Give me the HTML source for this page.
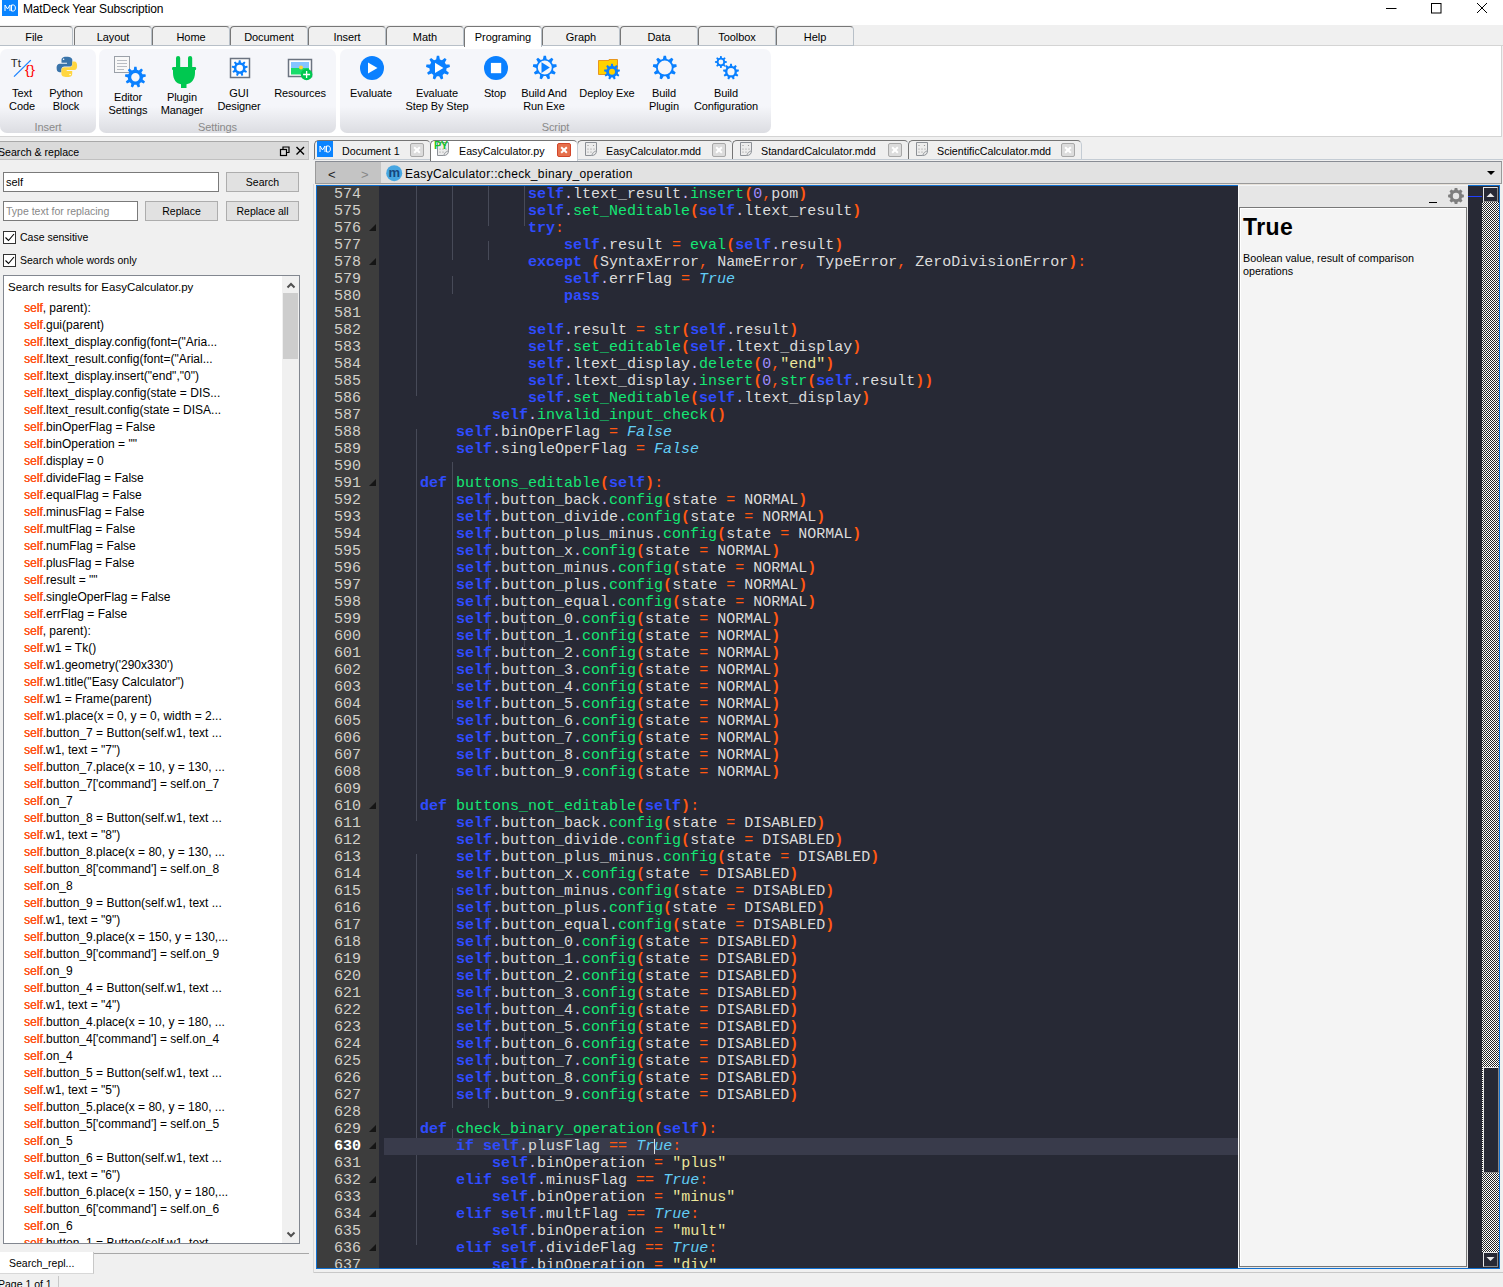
<!DOCTYPE html>
<html><head><meta charset="utf-8">
<style>
*{margin:0;padding:0;box-sizing:border-box}
html,body{width:1503px;height:1287px;overflow:hidden;background:#f0f0f0;font-family:"Liberation Sans",sans-serif;font-size:12px;color:#000}
.a{position:absolute}
/* title */
#title{left:0;top:0;width:1503px;height:25px;background:#fff}
#mdico{left:2px;top:0;width:16px;height:16px;background:#0a84ff}
#ttext{left:23px;top:1px;font-size:12px;line-height:16px;letter-spacing:-0.15px}
/* menu tabs */
#menubar{left:0;top:25px;width:1503px;height:20px;background:#f0f0f0}
.mt{top:26px;height:20px;width:78px;border:1px solid #777;border-right-color:#b8c0c8;border-bottom:none;border-radius:4px 4px 0 0;background:#f0f0f0;text-align:center;line-height:20px;font-size:11px;letter-spacing:-0.05px}
.mt.act{background:#fff;height:21px;z-index:2}
#menuline{left:0;top:45px;width:854px;height:1px;background:#b8c0c8;z-index:1}
#menuline2{left:854px;top:45px;width:649px;height:1px;background:#d4d4d4;z-index:1}
/* ribbon */
#ribbon{left:0;top:46px;width:1502px;height:91px;background:#fff;border-right:1px solid #d4d4d4;border-bottom:1px solid #d4d4d4}
.grp{top:49px;height:84px;border-radius:7px;background:linear-gradient(#f5f6fa 0%,#f5f6fa 68%,#dcdde2 100%)}
.glab{color:#8a8a8a;font-size:11px;letter-spacing:-0.1px;text-align:center;top:120px;line-height:14px}
.bt{text-align:center;font-size:11px;line-height:13px;color:#000;white-space:nowrap;letter-spacing:-0.1px}
/* dock */
#dockhead{left:0;top:141px;width:309px;height:19px;background:#dadada;border-top:1px solid #a8a8a8;border-bottom:1px solid #c0c0c0;border-right:1px solid #c4c4c4}
#docktitle{left:-2px;top:145px;font-size:10.6px;line-height:15px;letter-spacing:0px}
/* doc tabs */
.dt{top:140px;height:19px;border:1px solid #747474;border-right-color:#c4ccd4;border-bottom:none;border-radius:5px 5px 0 0;background:#efefef;font-size:10.7px;line-height:20px;white-space:nowrap}
.dt.act{background:#fff;height:21px;z-index:3}
.cx{position:absolute;top:2px;width:14px;height:14px;border:1px solid #a8a8a8;background:#dcdcdc;border-radius:2px}
.cx:before,.cx:after{content:"";position:absolute;left:2px;top:5px;width:8px;height:2px;background:#fff;transform:rotate(45deg)}
.cx:after{transform:rotate(-45deg)}
.cx.red{background:#e6704c;border-color:#d2462a}
.dice{position:absolute;top:1px;width:16px;height:16px;border:1px solid #c8c8c8;background:#f6f6f6;border-radius:3px;transform:skewY(-8deg)}
/* editor header */
#edhead{left:315px;top:161px;width:1187px;height:23px;background:#e2e2e2;border:1px solid #9a9a9a;border-top-color:#888c94}
#navbox{left:316px;top:162px;width:65px;height:21px;background:#c4c4c4}
/* code */
#codebox{left:316px;top:185px;width:1184px;height:1084px;background:#272935;border:1px solid #1070d0;overflow:hidden}
#gutter{left:0;top:0;width:62px;height:1085px;background:#3d3d3d}
.ln{position:absolute;left:0;width:44px;text-align:right;font-family:"Liberation Mono",monospace;font-size:15px;line-height:17px;color:#d2d0ca}
.ln.cur{color:#fff;font-weight:bold}
.fold{position:absolute;left:52px;width:0;height:0;border-left:7px solid transparent;border-bottom:7px solid #151515}
#code{left:0;top:0;width:1200px;height:1085px}
.cl{position:absolute;left:67px;white-space:pre;font-family:"Liberation Mono",monospace;font-size:15px;line-height:17px;color:#dcdcdc;height:17px;width:855px}
.cl b,.cl i{font-style:normal;font-weight:normal}
.cl .kw{color:#2f4cff;font-weight:bold}
.cl .pa{color:#ff5812;font-weight:bold}
.cl .op{color:#ff5812}
.cl .fn{color:#14e674}
.cl .dt2{color:#cdbaf2}
.cl .nu{color:#a08cff}
.cl .st{color:#ece69a}
.cl .cn{color:#62cef6;font-style:italic}
.cl.cur{background:#393b4b}
.gd{position:absolute;width:1px;background:#474a58}
/* calltip */
#ctip{left:1238px;top:185px;width:230px;height:1083px;background:#e6e6e6;border-left:1px solid #fafafa;border-top:1px solid #f2f4f6}
#ctbox{left:1239px;top:207px;width:228px;height:1060px;background:#f4f4f4;border:1px solid #787878;box-shadow:inset 1px 1px 0 #fff}
#sbar{left:1482px;top:202px;width:17px;height:1050px;background-image:conic-gradient(#fff 25%,#262626 0 50%,#fff 0 75%,#262626 0);background-size:2px 2px}
.sbtn{position:absolute;left:1483px;width:15px;height:15px;background:#272935;border:1px solid #e8e8e8;border-right-color:#888;border-bottom-color:#888}
/* search panel */
.inp{background:#fff;border:1px solid #7a7a7a;white-space:nowrap;overflow:hidden}
.pbtn{background:#e1e1e1;border:1px solid #adadad;text-align:center;line-height:18px;font-size:10.5px}
.cb{width:13px;height:13px;border:1px solid #333;background:#fff}
#reslist{left:3px;top:275px;width:297px;height:969px;background:#fff;border:1px solid #828790;overflow:hidden}
.rr{position:absolute;left:20px;white-space:pre;font-size:12px;line-height:17px;height:17px}
.sf{color:#ff4e10;text-shadow:0.3px 0 0 #ff4e10}
</style></head><body>
<div id="title" class="a"></div>
<div id="mdico" class="a"><svg width="16" height="16"><path d="M3,11 V5 L5.5,9 L8,5 V11 M9.5,5 H11.5 C14,5 14,11 11.5,11 H9.5 Z" stroke="#fff" stroke-width="1" fill="none"/></svg></div>
<div id="ttext" class="a">MatDeck Year Subscription</div>
<svg class="a" style="left:1380px;top:0" width="123" height="20"><path d="M6,8.5 H16.5" stroke="#000" stroke-width="1"/><rect x="51.5" y="3.5" width="9.5" height="9.5" fill="none" stroke="#000" stroke-width="1"/><path d="M97,3 L107,13 M107,3 L97,13" stroke="#000" stroke-width="1"/></svg>

<div id="menubar" class="a"></div>
<div class="a mt" style="left:-5px">File</div>
<div class="a mt" style="left:74px">Layout</div>
<div class="a mt" style="left:152px">Home</div>
<div class="a mt" style="left:230px">Document</div>
<div class="a mt" style="left:308px">Insert</div>
<div class="a mt" style="left:386px">Math</div>
<div class="a mt act" style="left:464px">Programing</div>
<div class="a mt" style="left:542px">Graph</div>
<div class="a mt" style="left:620px">Data</div>
<div class="a mt" style="left:698px">Toolbox</div>
<div class="a mt" style="left:776px">Help</div>
<div id="menuline" class="a"></div><div id="menuline2" class="a"></div>

<div id="ribbon" class="a"></div>
<div class="a grp" style="left:0;width:96px"></div>
<div class="a grp" style="left:99px;width:237px"></div>
<div class="a grp" style="left:340px;width:431px"></div>
<div class="a glab" style="left:0;width:96px">Insert</div>
<div class="a glab" style="left:99px;width:237px">Settings</div>
<div class="a glab" style="left:340px;width:431px">Script</div>
<svg class="a" style="left:0;top:0" width="800" height="140" viewBox="0 0 800 140">
<text x="10.8" y="67" font-family="Liberation Sans" font-size="11.5" fill="#2a2a2a">Tt</text>
<line x1="14" y1="76.6" x2="30.8" y2="60.1" stroke="#1a82ff" stroke-width="1.3"/>
<text x="25" y="74.2" font-family="Liberation Sans" font-size="12" fill="#ff0000" textLength="10" lengthAdjust="spacingAndGlyphs">{}</text>
<path d="M66.5,56.7 C62,56.7 61.5,58.6 61.5,60.3 V62.8 H67 V63.7 H59.5 C57.2,63.7 56.6,66 56.6,67.8 C56.6,70.4 57.3,72.2 59.5,72.2 H61.4 V69.6 C61.4,67.9 62.8,66.6 64.5,66.6 H69.5 C71.2,66.6 72.3,65.4 72.3,63.7 V60 C72.3,58 70.6,56.7 66.5,56.7Z" fill="#3a74aa"/>
<path d="M67.2,77.1 C71.7,77.1 72.2,75.2 72.2,73.5 V71 H66.7 V70.1 H74.2 C76.5,70.1 77.1,67.8 77.1,66 C77.1,63.4 76.4,61.6 74.2,61.6 H72.3 V64.2 C72.3,65.9 70.9,67.2 69.2,67.2 H64.2 C62.5,67.2 61.4,68.4 61.4,70.1 V73.8 C61.4,75.8 63.1,77.1 67.2,77.1Z" fill="#ffd640"/>
<circle cx="63.6" cy="59.3" r="0.8" fill="#fff"/><circle cx="70.1" cy="74.5" r="0.8" fill="#fff"/>
<rect x="114.5" y="56.5" width="15" height="16" fill="#f8f8f8" stroke="#9aa0a8"/>
<path d="M117,60.5h10M117,63.5h10M117,66.5h10M117,69.5h7" stroke="#b8bcc2" stroke-width="1"/>
<path fill-rule="evenodd" d="M133.82,69.77 L134.23,66.77 L136.57,66.77 L136.98,69.77 L138.97,70.49 L141.21,68.45 L143.00,69.96 L141.39,72.52 L142.45,74.35 L145.47,74.24 L145.88,76.54 L143.00,77.47 L142.63,79.55 L145.02,81.40 L143.85,83.43 L141.05,82.29 L139.43,83.65 L140.07,86.60 L137.87,87.41 L136.46,84.73 L134.34,84.73 L132.93,87.41 L130.73,86.60 L131.37,83.65 L129.75,82.29 L126.95,83.43 L125.78,81.40 L128.17,79.55 L127.80,77.47 L124.92,76.54 L125.33,74.24 L128.35,74.35 L129.41,72.52 L127.80,69.96 L129.59,68.45 L131.83,70.49Z M139.60,77.20 A4.2,4.2 0 1 0 131.20,77.20 A4.2,4.2 0 1 0 139.60,77.20Z" fill="#0a80ff"/>
<path d="M178.1,58 v10 M190.1,58 v10" stroke="#00c850" stroke-width="4.2" stroke-linecap="round"/>
<path d="M173,67 H195.2 Q196.2,67 196.2,68.5 Q196.2,70 195,70.3 V73 C195,79.5 191,83.8 186.5,84.2 V88 H181 V84.2 C176.5,83.8 173,79.5 173,73 V70.3 Q172,70 172,68.5 Q172,67 173,67Z" fill="#00c850"/>
<rect x="230.5" y="58.5" width="19" height="19" fill="#fdfdfd" stroke="#6b7380" stroke-width="1.5"/>
<path fill-rule="evenodd" d="M238.49,62.43 L238.81,60.15 L240.59,60.15 L240.91,62.43 L242.42,62.98 L244.13,61.44 L245.49,62.58 L244.27,64.53 L245.08,65.93 L247.37,65.84 L247.68,67.60 L245.50,68.30 L245.22,69.89 L247.03,71.30 L246.14,72.85 L244.01,71.98 L242.77,73.02 L243.26,75.27 L241.58,75.88 L240.51,73.84 L238.89,73.84 L237.82,75.88 L236.14,75.27 L236.63,73.02 L235.39,71.98 L233.26,72.85 L232.37,71.30 L234.18,69.89 L233.90,68.30 L231.72,67.60 L232.03,65.84 L234.32,65.93 L235.13,64.53 L233.91,62.58 L235.27,61.44 L236.98,62.98Z M243.00,68.10 A3.3,3.3 0 1 0 236.40,68.10 A3.3,3.3 0 1 0 243.00,68.10Z" fill="#0a80ff"/>
<rect x="288.5" y="59.5" width="23" height="17" fill="#fff" stroke="#6b7380" stroke-width="1.5"/>
<rect x="291" y="62" width="18" height="7" fill="#84c4ff"/>
<rect x="291" y="68" width="18" height="6.5" fill="#18dc6a"/>
<circle cx="301" cy="67.6" r="2" fill="#ffd43a"/>
<circle cx="306.6" cy="74.5" r="5.8" fill="#00c850"/>
<path d="M306.6,71v7M303.1,74.5h7" stroke="#fff" stroke-width="1.3"/>
<circle cx="372" cy="68" r="12" fill="#0a80ff"/>
<path d="M368,62.5 L377.5,68 L368,73.5Z" fill="#fff"/>
<path d="M436.15,59.40 L436.83,55.86 L439.17,55.86 L439.85,59.40 L441.98,60.18 L444.78,57.90 L446.57,59.40 L444.81,62.55 L445.95,64.52 L449.56,64.57 L449.96,66.88 L446.59,68.16 L446.20,70.40 L448.93,72.76 L447.76,74.79 L444.35,73.60 L442.61,75.06 L443.19,78.62 L440.98,79.42 L439.14,76.32 L436.86,76.32 L435.02,79.42 L432.81,78.62 L433.39,75.06 L431.65,73.60 L428.24,74.79 L427.07,72.76 L429.80,70.40 L429.41,68.16 L426.04,66.88 L426.44,64.57 L430.05,64.52 L431.19,62.55 L429.43,59.40 L431.22,57.90 L434.02,60.18Z" fill="#0a80ff"/>
<path d="M435,62.8 L443.4,68 L435,73.1Z" fill="#fff"/>
<circle cx="496" cy="68" r="12" fill="#0a80ff"/>
<rect x="490.9" y="62.9" width="10.3" height="10.3" fill="#fff"/>
<path fill-rule="evenodd" d="M542.95,59.20 L543.63,55.66 L545.97,55.66 L546.65,59.20 L548.78,59.98 L551.58,57.70 L553.37,59.20 L551.61,62.35 L552.75,64.32 L556.36,64.37 L556.76,66.68 L553.39,67.96 L553.00,70.20 L555.73,72.56 L554.56,74.59 L551.15,73.40 L549.41,74.86 L549.99,78.42 L547.78,79.22 L545.94,76.12 L543.66,76.12 L541.82,79.22 L539.61,78.42 L540.19,74.86 L538.45,73.40 L535.04,74.59 L533.87,72.56 L536.60,70.20 L536.21,67.96 L532.84,66.68 L533.24,64.37 L536.85,64.32 L537.99,62.35 L536.23,59.20 L538.02,57.70 L540.82,59.98Z M551.80,67.60 A7,7 0 1 0 537.80,67.60 A7,7 0 1 0 551.80,67.60Z" fill="#0a80ff"/>
<path d="M541.5,62.3 L549.8,67.6 L541.5,72.9Z" fill="#0a80ff"/>
<path d="M598.5,74.5 V60.5 H609 V59.5 H617.5 V74.5Z" fill="#ffd200" stroke="#e8961e" stroke-width="1"/>
<path d="M610.79,66.03 L611.11,63.75 L612.89,63.75 L613.21,66.03 L614.72,66.58 L616.43,65.04 L617.79,66.18 L616.57,68.13 L617.38,69.53 L619.67,69.44 L619.98,71.20 L617.80,71.90 L617.52,73.49 L619.33,74.90 L618.44,76.45 L616.31,75.58 L615.07,76.62 L615.56,78.87 L613.88,79.48 L612.81,77.44 L611.19,77.44 L610.12,79.48 L608.44,78.87 L608.93,76.62 L607.69,75.58 L605.56,76.45 L604.67,74.90 L606.48,73.49 L606.20,71.90 L604.02,71.20 L604.33,69.44 L606.62,69.53 L607.43,68.13 L606.21,66.18 L607.57,65.04 L609.28,66.58Z" fill="#0a80ff"/>
<circle cx="612" cy="71.7" r="3" fill="#ffd200"/>
<path fill-rule="evenodd" d="M662.91,59.01 L663.63,55.66 L665.97,55.66 L666.69,59.01 L668.88,59.80 L671.58,57.70 L673.37,59.20 L671.77,62.23 L672.94,64.25 L676.36,64.37 L676.76,66.68 L673.59,67.97 L673.19,70.26 L675.73,72.56 L674.56,74.59 L671.30,73.53 L669.52,75.03 L669.99,78.42 L667.78,79.22 L665.96,76.32 L663.64,76.32 L661.82,79.22 L659.61,78.42 L660.08,75.03 L658.30,73.53 L655.04,74.59 L653.87,72.56 L656.41,70.26 L656.01,67.97 L652.84,66.68 L653.24,64.37 L656.66,64.25 L657.83,62.23 L656.23,59.20 L658.02,57.70 L660.72,59.80Z M671.80,67.60 A7,7 0 1 0 657.80,67.60 A7,7 0 1 0 671.80,67.60Z" fill="#0a80ff"/>
<path fill-rule="evenodd" d="M719.90,57.82 L720.15,56.05 L721.65,56.05 L721.90,57.82 L723.15,58.33 L724.58,57.26 L725.64,58.32 L724.57,59.75 L725.08,61.00 L726.85,61.25 L726.85,62.75 L725.08,63.00 L724.57,64.25 L725.64,65.68 L724.58,66.74 L723.15,65.67 L721.90,66.18 L721.65,67.95 L720.15,67.95 L719.90,66.18 L718.65,65.67 L717.22,66.74 L716.16,65.68 L717.23,64.25 L716.72,63.00 L714.95,62.75 L714.95,61.25 L716.72,61.00 L717.23,59.75 L716.16,58.32 L717.22,57.26 L718.65,58.33Z M723.30,62.00 A2.4,2.4 0 1 0 718.50,62.00 A2.4,2.4 0 1 0 723.30,62.00Z" fill="#0a80ff"/>
<path fill-rule="evenodd" d="M729.77,65.93 L730.11,63.75 L731.89,63.75 L732.23,65.93 L733.77,66.49 L735.43,65.04 L736.79,66.18 L735.65,68.07 L736.47,69.49 L738.67,69.44 L738.98,71.20 L736.90,71.91 L736.61,73.52 L738.33,74.90 L737.44,76.45 L735.38,75.65 L734.13,76.70 L734.56,78.87 L732.88,79.48 L731.82,77.54 L730.18,77.54 L729.12,79.48 L727.44,78.87 L727.87,76.70 L726.62,75.65 L724.56,76.45 L723.67,74.90 L725.39,73.52 L725.10,71.91 L723.02,71.20 L723.33,69.44 L725.53,69.49 L726.35,68.07 L725.21,66.18 L726.57,65.04 L728.23,66.49Z M734.60,71.70 A3.6,3.6 0 1 0 727.40,71.70 A3.6,3.6 0 1 0 734.60,71.70Z" fill="#0a80ff"/>
</svg>
<div class="a bt" style="left:-28px;width:100px;top:87px">Text<br>Code</div>
<div class="a bt" style="left:16px;width:100px;top:87px">Python<br>Block</div>
<div class="a bt" style="left:78px;width:100px;top:91px">Editor<br>Settings</div>
<div class="a bt" style="left:132px;width:100px;top:91px">Plugin<br>Manager</div>
<div class="a bt" style="left:189px;width:100px;top:87px">GUI<br>Designer</div>
<div class="a bt" style="left:250px;width:100px;top:87px">Resources</div>
<div class="a bt" style="left:321px;width:100px;top:87px">Evaluate</div>
<div class="a bt" style="left:387px;width:100px;top:87px">Evaluate<br>Step By Step</div>
<div class="a bt" style="left:445px;width:100px;top:87px">Stop</div>
<div class="a bt" style="left:494px;width:100px;top:87px">Build And<br>Run Exe</div>
<div class="a bt" style="left:557px;width:100px;top:87px">Deploy Exe</div>
<div class="a bt" style="left:614px;width:100px;top:87px">Build<br>Plugin</div>
<div class="a bt" style="left:676px;width:100px;top:87px">Build<br>Configuration</div>


<div id="dockhead" class="a"></div>
<div id="docktitle" class="a">Search &amp; replace</div>
<svg class="a" style="left:278px;top:144px" width="30" height="14"><rect x="2.5" y="5.5" width="6" height="6" fill="none" stroke="#000" stroke-width="1.2"/><path d="M5,5.5 V3 H11 V8.5 H8.5" fill="none" stroke="#000" stroke-width="1.2"/><path d="M18.5,3 L26,10.5 M26,3 L18.5,10.5" stroke="#000" stroke-width="1.4"/></svg>
<div class="a inp" style="left:3px;top:172px;width:216px;height:20px;padding-left:2px;line-height:19px;font-size:11px">self</div>
<div class="a pbtn" style="left:226px;top:172px;width:73px;height:20px">Search</div>
<div class="a inp" style="left:3px;top:201px;width:135px;height:20px;padding-left:2px;line-height:19px;color:#888;font-size:10.5px">Type text for replacing</div>
<div class="a pbtn" style="left:145px;top:201px;width:73px;height:20px">Replace</div>
<div class="a pbtn" style="left:226px;top:201px;width:73px;height:20px">Replace all</div>
<div class="a cb" style="left:3px;top:231px"><svg width="11" height="11" style="position:absolute;left:0;top:0"><path d="M1.5,5.5 L4.5,8.5 L10,2" fill="none" stroke="#000" stroke-width="1.1"/></svg></div>
<div class="a" style="left:20px;top:230px;line-height:15px;font-size:10.5px">Case sensitive</div>
<div class="a cb" style="left:3px;top:254px"><svg width="11" height="11" style="position:absolute;left:0;top:0"><path d="M1.5,5.5 L4.5,8.5 L10,2" fill="none" stroke="#000" stroke-width="1.1"/></svg></div>
<div class="a" style="left:20px;top:253px;line-height:15px;font-size:10.5px">Search whole words only</div>
<div id="reslist" class="a">
<div class="a" style="left:4px;top:3px;line-height:17px;font-size:11.5px">Search results for EasyCalculator.py</div>
<div class="a" style="left:0;top:21px;width:280px;height:960px">
<div class="rr" style="top:3px"><span class="sf">self</span>, parent):</div>
<div class="rr" style="top:20px"><span class="sf">self</span>.gui(parent)</div>
<div class="rr" style="top:37px"><span class="sf">self</span>.ltext_display.config(font=(&quot;Aria...</div>
<div class="rr" style="top:54px"><span class="sf">self</span>.ltext_result.config(font=(&quot;Arial...</div>
<div class="rr" style="top:71px"><span class="sf">self</span>.ltext_display.insert(&quot;end&quot;,&quot;0&quot;)</div>
<div class="rr" style="top:88px"><span class="sf">self</span>.ltext_display.config(state = DIS...</div>
<div class="rr" style="top:105px"><span class="sf">self</span>.ltext_result.config(state = DISA...</div>
<div class="rr" style="top:122px"><span class="sf">self</span>.binOperFlag = False</div>
<div class="rr" style="top:139px"><span class="sf">self</span>.binOperation = &quot;&quot;</div>
<div class="rr" style="top:156px"><span class="sf">self</span>.display = 0</div>
<div class="rr" style="top:173px"><span class="sf">self</span>.divideFlag = False</div>
<div class="rr" style="top:190px"><span class="sf">self</span>.equalFlag = False</div>
<div class="rr" style="top:207px"><span class="sf">self</span>.minusFlag = False</div>
<div class="rr" style="top:224px"><span class="sf">self</span>.multFlag = False</div>
<div class="rr" style="top:241px"><span class="sf">self</span>.numFlag = False</div>
<div class="rr" style="top:258px"><span class="sf">self</span>.plusFlag = False</div>
<div class="rr" style="top:275px"><span class="sf">self</span>.result = &quot;&quot;</div>
<div class="rr" style="top:292px"><span class="sf">self</span>.singleOperFlag = False</div>
<div class="rr" style="top:309px"><span class="sf">self</span>.errFlag = False</div>
<div class="rr" style="top:326px"><span class="sf">self</span>, parent):</div>
<div class="rr" style="top:343px"><span class="sf">self</span>.w1 = Tk()</div>
<div class="rr" style="top:360px"><span class="sf">self</span>.w1.geometry(&#x27;290x330&#x27;)</div>
<div class="rr" style="top:377px"><span class="sf">self</span>.w1.title(&quot;Easy Calculator&quot;)</div>
<div class="rr" style="top:394px"><span class="sf">self</span>.w1 = Frame(parent)</div>
<div class="rr" style="top:411px"><span class="sf">self</span>.w1.place(x = 0, y = 0, width = 2...</div>
<div class="rr" style="top:428px"><span class="sf">self</span>.button_7 = Button(self.w1, text ...</div>
<div class="rr" style="top:445px"><span class="sf">self</span>.w1, text = &quot;7&quot;)</div>
<div class="rr" style="top:462px"><span class="sf">self</span>.button_7.place(x = 10, y = 130, ...</div>
<div class="rr" style="top:479px"><span class="sf">self</span>.button_7[&#x27;command&#x27;] = self.on_7</div>
<div class="rr" style="top:496px"><span class="sf">self</span>.on_7</div>
<div class="rr" style="top:513px"><span class="sf">self</span>.button_8 = Button(self.w1, text ...</div>
<div class="rr" style="top:530px"><span class="sf">self</span>.w1, text = &quot;8&quot;)</div>
<div class="rr" style="top:547px"><span class="sf">self</span>.button_8.place(x = 80, y = 130, ...</div>
<div class="rr" style="top:564px"><span class="sf">self</span>.button_8[&#x27;command&#x27;] = self.on_8</div>
<div class="rr" style="top:581px"><span class="sf">self</span>.on_8</div>
<div class="rr" style="top:598px"><span class="sf">self</span>.button_9 = Button(self.w1, text ...</div>
<div class="rr" style="top:615px"><span class="sf">self</span>.w1, text = &quot;9&quot;)</div>
<div class="rr" style="top:632px"><span class="sf">self</span>.button_9.place(x = 150, y = 130,...</div>
<div class="rr" style="top:649px"><span class="sf">self</span>.button_9[&#x27;command&#x27;] = self.on_9</div>
<div class="rr" style="top:666px"><span class="sf">self</span>.on_9</div>
<div class="rr" style="top:683px"><span class="sf">self</span>.button_4 = Button(self.w1, text ...</div>
<div class="rr" style="top:700px"><span class="sf">self</span>.w1, text = &quot;4&quot;)</div>
<div class="rr" style="top:717px"><span class="sf">self</span>.button_4.place(x = 10, y = 180, ...</div>
<div class="rr" style="top:734px"><span class="sf">self</span>.button_4[&#x27;command&#x27;] = self.on_4</div>
<div class="rr" style="top:751px"><span class="sf">self</span>.on_4</div>
<div class="rr" style="top:768px"><span class="sf">self</span>.button_5 = Button(self.w1, text ...</div>
<div class="rr" style="top:785px"><span class="sf">self</span>.w1, text = &quot;5&quot;)</div>
<div class="rr" style="top:802px"><span class="sf">self</span>.button_5.place(x = 80, y = 180, ...</div>
<div class="rr" style="top:819px"><span class="sf">self</span>.button_5[&#x27;command&#x27;] = self.on_5</div>
<div class="rr" style="top:836px"><span class="sf">self</span>.on_5</div>
<div class="rr" style="top:853px"><span class="sf">self</span>.button_6 = Button(self.w1, text ...</div>
<div class="rr" style="top:870px"><span class="sf">self</span>.w1, text = &quot;6&quot;)</div>
<div class="rr" style="top:887px"><span class="sf">self</span>.button_6.place(x = 150, y = 180,...</div>
<div class="rr" style="top:904px"><span class="sf">self</span>.button_6[&#x27;command&#x27;] = self.on_6</div>
<div class="rr" style="top:921px"><span class="sf">self</span>.on_6</div>
<div class="rr" style="top:938px"><span class="sf">self</span>.button_1 = Button(self.w1, text ...</div>
</div>
<div class="a" style="left:278px;top:0;width:17px;height:967px;background:#f0f0f0"></div>
<div class="a" style="left:279px;top:17px;width:15px;height:66px;background:#cdcdcd"></div>
<svg class="a" style="left:280px;top:3px" width="14" height="12"><path d="M3.5,8.5 L7,5 L10.5,8.5" fill="none" stroke="#505050" stroke-width="2"/></svg>
<svg class="a" style="left:280px;top:953px" width="14" height="12"><path d="M3.5,3.5 L7,7 L10.5,3.5" fill="none" stroke="#505050" stroke-width="2"/></svg>
</div>
<div class="a" style="left:0;top:1252px;width:94px;height:22px;background:#fff;border-right:1px solid #c8c8c8;border-bottom:1px solid #d8d8d8"></div>
<div class="a" style="left:9px;top:1256px;line-height:15px;font-size:10.5px">Search_repl...</div>
<div class="a" style="left:94px;top:1253px;width:215px;height:1px;background:#a8a8a8"></div>
<div class="a" style="left:58px;top:1276px;width:1px;height:11px;background:#c8c8c8"></div>
<div class="a" style="left:-2px;top:1277px;line-height:15px;font-size:10.5px">Page 1 of 1</div>

<!-- doc tabs -->
<div class="a" style="left:313px;top:159px;width:1190px;height:1px;background:#c4ccd4"></div>
<div class="a dt" style="left:314px;width:117px"><div class="a" style="left:2px;top:0;width:16px;height:16px;background:#0a84ff"><svg width="16" height="16"><path d="M3,11 V5 L5.5,9 L8,5 V11 M9.5,5 H11.5 C14,5 14,11 11.5,11 H9.5 Z" stroke="#fff" stroke-width="1" fill="none"/></svg></div><span class="a" style="left:27px;top:0">Document 1</span><div class="cx" style="left:95px"></div></div>
<div class="a dt act" style="left:430px;width:148px"><svg class="a" style="left:4px;top:-1px" width="16" height="17"><path d="M2.5,2.5 H13.5 V10.5 Q13.5,15.5 8.5,15.5 H2.5Z" fill="#ececec" stroke="#8c9096" stroke-width="1"/><path d="M8.5,15.5 Q9.5,12 13.5,10.5" fill="none" stroke="#8c9096" stroke-width="0.8"/><g fill="#8a8a8a"><circle cx="5" cy="5.5" r="0.6"/><circle cx="10.5" cy="5.5" r="0.6"/><circle cx="5" cy="9" r="0.6"/><circle cx="8" cy="9" r="0.6"/><circle cx="11" cy="9" r="0.6"/><circle cx="5" cy="12" r="0.6"/><circle cx="8" cy="12" r="0.6"/></g></svg><span class="a" style="left:3px;top:-1px;color:#17c22a;font-weight:bold;font-size:11px;letter-spacing:-0.5px;line-height:10px">PY</span><span class="a" style="left:28px;top:0">EasyCalculator.py</span><div class="cx red" style="left:126px"></div></div>
<div class="a dt" style="left:577px;width:156px"><svg class="a" style="left:5px;top:-1px" width="16" height="17"><path d="M2.5,2.5 H13.5 V10.5 Q13.5,15.5 8.5,15.5 H2.5Z" fill="#ececec" stroke="#8c9096" stroke-width="1"/><path d="M8.5,15.5 Q9.5,12 13.5,10.5" fill="none" stroke="#8c9096" stroke-width="0.8"/><g fill="#8a8a8a"><circle cx="5" cy="5.5" r="0.6"/><circle cx="10.5" cy="5.5" r="0.6"/><circle cx="5" cy="9" r="0.6"/><circle cx="8" cy="9" r="0.6"/><circle cx="11" cy="9" r="0.6"/><circle cx="5" cy="12" r="0.6"/><circle cx="8" cy="12" r="0.6"/></g></svg><span class="a" style="left:28px;top:0">EasyCalculator.mdd</span><div class="cx" style="left:134px"></div></div>
<div class="a dt" style="left:732px;width:177px"><svg class="a" style="left:5px;top:-1px" width="16" height="17"><path d="M2.5,2.5 H13.5 V10.5 Q13.5,15.5 8.5,15.5 H2.5Z" fill="#ececec" stroke="#8c9096" stroke-width="1"/><path d="M8.5,15.5 Q9.5,12 13.5,10.5" fill="none" stroke="#8c9096" stroke-width="0.8"/><g fill="#8a8a8a"><circle cx="5" cy="5.5" r="0.6"/><circle cx="10.5" cy="5.5" r="0.6"/><circle cx="5" cy="9" r="0.6"/><circle cx="8" cy="9" r="0.6"/><circle cx="11" cy="9" r="0.6"/><circle cx="5" cy="12" r="0.6"/><circle cx="8" cy="12" r="0.6"/></g></svg><span class="a" style="left:28px;top:0">StandardCalculator.mdd</span><div class="cx" style="left:155px"></div></div>
<div class="a dt" style="left:908px;width:174px"><svg class="a" style="left:5px;top:-1px" width="16" height="17"><path d="M2.5,2.5 H13.5 V10.5 Q13.5,15.5 8.5,15.5 H2.5Z" fill="#ececec" stroke="#8c9096" stroke-width="1"/><path d="M8.5,15.5 Q9.5,12 13.5,10.5" fill="none" stroke="#8c9096" stroke-width="0.8"/><g fill="#8a8a8a"><circle cx="5" cy="5.5" r="0.6"/><circle cx="10.5" cy="5.5" r="0.6"/><circle cx="5" cy="9" r="0.6"/><circle cx="8" cy="9" r="0.6"/><circle cx="11" cy="9" r="0.6"/><circle cx="5" cy="12" r="0.6"/><circle cx="8" cy="12" r="0.6"/></g></svg><span class="a" style="left:28px;top:0">ScientificCalculator.mdd</span><div class="cx" style="left:152px"></div></div>

<div id="edhead" class="a"></div>
<div id="navbox" class="a"></div>
<div class="a" style="left:328px;top:167px;font-size:13px;line-height:16px;color:#222">&lt;</div>
<div class="a" style="left:361px;top:167px;font-size:13px;line-height:16px;color:#888">&gt;</div>
<svg class="a" style="left:386px;top:165px" width="17" height="17"><circle cx="8.2" cy="8.2" r="8" fill="#46a6e2"/><text x="8.2" y="12" text-anchor="middle" font-family="Liberation Sans" font-size="13" font-weight="bold" fill="#17467e">m</text></svg>
<div class="a" style="left:405px;top:166px;font-size:12px;line-height:16px;letter-spacing:0.34px">EasyCalculator::check_binary_operation</div>
<svg class="a" style="left:1484px;top:168px" width="14" height="10"><path d="M3,3 H11 L7,7Z" fill="#000"/></svg>

<div class="a" style="left:316px;top:184px;width:1184px;height:1px;background:#e8e2da"></div>
<div class="a" style="left:313px;top:1272px;width:1190px;height:1px;background:#c8c8c8"></div>
<div class="a" style="left:313px;top:184px;width:1px;height:1089px;background:#d8d8d8"></div>
<div id="codebox" class="a">
<div id="gutter" class="a">
<div class="ln" style="top:0px">574</div>
<div class="ln" style="top:17px">575</div>
<div class="ln" style="top:34px">576</div>
<div class="fold" style="top:38px"></div>
<div class="ln" style="top:51px">577</div>
<div class="ln" style="top:68px">578</div>
<div class="fold" style="top:72px"></div>
<div class="ln" style="top:85px">579</div>
<div class="ln" style="top:102px">580</div>
<div class="ln" style="top:119px">581</div>
<div class="ln" style="top:136px">582</div>
<div class="ln" style="top:153px">583</div>
<div class="ln" style="top:170px">584</div>
<div class="ln" style="top:187px">585</div>
<div class="ln" style="top:204px">586</div>
<div class="ln" style="top:221px">587</div>
<div class="ln" style="top:238px">588</div>
<div class="ln" style="top:255px">589</div>
<div class="ln" style="top:272px">590</div>
<div class="ln" style="top:289px">591</div>
<div class="fold" style="top:293px"></div>
<div class="ln" style="top:306px">592</div>
<div class="ln" style="top:323px">593</div>
<div class="ln" style="top:340px">594</div>
<div class="ln" style="top:357px">595</div>
<div class="ln" style="top:374px">596</div>
<div class="ln" style="top:391px">597</div>
<div class="ln" style="top:408px">598</div>
<div class="ln" style="top:425px">599</div>
<div class="ln" style="top:442px">600</div>
<div class="ln" style="top:459px">601</div>
<div class="ln" style="top:476px">602</div>
<div class="ln" style="top:493px">603</div>
<div class="ln" style="top:510px">604</div>
<div class="ln" style="top:527px">605</div>
<div class="ln" style="top:544px">606</div>
<div class="ln" style="top:561px">607</div>
<div class="ln" style="top:578px">608</div>
<div class="ln" style="top:595px">609</div>
<div class="ln" style="top:612px">610</div>
<div class="fold" style="top:616px"></div>
<div class="ln" style="top:629px">611</div>
<div class="ln" style="top:646px">612</div>
<div class="ln" style="top:663px">613</div>
<div class="ln" style="top:680px">614</div>
<div class="ln" style="top:697px">615</div>
<div class="ln" style="top:714px">616</div>
<div class="ln" style="top:731px">617</div>
<div class="ln" style="top:748px">618</div>
<div class="ln" style="top:765px">619</div>
<div class="ln" style="top:782px">620</div>
<div class="ln" style="top:799px">621</div>
<div class="ln" style="top:816px">622</div>
<div class="ln" style="top:833px">623</div>
<div class="ln" style="top:850px">624</div>
<div class="ln" style="top:867px">625</div>
<div class="ln" style="top:884px">626</div>
<div class="ln" style="top:901px">627</div>
<div class="ln" style="top:918px">628</div>
<div class="ln" style="top:935px">629</div>
<div class="fold" style="top:939px"></div>
<div class="ln cur" style="top:952px">630</div>
<div class="fold" style="top:956px"></div>
<div class="ln" style="top:969px">631</div>
<div class="ln" style="top:986px">632</div>
<div class="fold" style="top:990px"></div>
<div class="ln" style="top:1003px">633</div>
<div class="ln" style="top:1020px">634</div>
<div class="fold" style="top:1024px"></div>
<div class="ln" style="top:1037px">635</div>
<div class="ln" style="top:1054px">636</div>
<div class="fold" style="top:1058px"></div>
<div class="ln" style="top:1071px">637</div>
</div>
<div id="code" class="a">
<div class="gd" style="left:99px;top:0px;height:210px"></div>
<div class="gd" style="left:99px;top:243px;height:392px"></div>
<div class="gd" style="left:99px;top:668px;height:391px"></div>
<div class="gd" style="left:135px;top:0px;height:74px"></div>
<div class="gd" style="left:135px;top:90px;height:18px"></div>
<div class="gd" style="left:135px;top:276px;height:222px"></div>
<div class="gd" style="left:135px;top:514px;height:19px"></div>
<div class="gd" style="left:135px;top:702px;height:220px"></div>
<div class="gd" style="left:135px;top:943px;height:19px"></div>
<div class="gd" style="left:171px;top:0px;height:40px"></div>
<div class="gd" style="left:171px;top:55px;height:19px"></div>
<div class="gd" style="left:171px;top:298px;height:197px"></div>
<div class="gd" style="left:171px;top:722px;height:200px"></div>
<div class="gd" style="left:207px;top:0px;height:40px"></div>
<div class="gd" style="left:207px;top:418px;height:43px"></div>
<div class="gd" style="left:207px;top:844px;height:42px"></div>
<div class="cl" style="top:0px">                <b class="kw">self</b><i class="dt2">.</i>ltext_result<i class="dt2">.</i><i class="fn">insert</i><b class="pa">(</b><i class="nu">0</i><i class="op">,</i>pom<b class="pa">)</b></div>
<div class="cl" style="top:17px">                <b class="kw">self</b><i class="dt2">.</i><i class="fn">set_Neditable</i><b class="pa">(</b><b class="kw">self</b><i class="dt2">.</i>ltext_result<b class="pa">)</b></div>
<div class="cl" style="top:34px">                <b class="kw">try</b><i class="op">:</i></div>
<div class="cl" style="top:51px">                    <b class="kw">self</b><i class="dt2">.</i>result <i class="op">=</i> <i class="fn">eval</i><b class="pa">(</b><b class="kw">self</b><i class="dt2">.</i>result<b class="pa">)</b></div>
<div class="cl" style="top:68px">                <b class="kw">except</b> <b class="pa">(</b>SyntaxError<i class="op">,</i> NameError<i class="op">,</i> TypeError<i class="op">,</i> ZeroDivisionError<b class="pa">)</b><i class="op">:</i></div>
<div class="cl" style="top:85px">                    <b class="kw">self</b><i class="dt2">.</i>errFlag <i class="op">=</i> <i class="cn">True</i></div>
<div class="cl" style="top:102px">                    <b class="kw">pass</b></div>
<div class="cl" style="top:119px"></div>
<div class="cl" style="top:136px">                <b class="kw">self</b><i class="dt2">.</i>result <i class="op">=</i> <i class="fn">str</i><b class="pa">(</b><b class="kw">self</b><i class="dt2">.</i>result<b class="pa">)</b></div>
<div class="cl" style="top:153px">                <b class="kw">self</b><i class="dt2">.</i><i class="fn">set_editable</i><b class="pa">(</b><b class="kw">self</b><i class="dt2">.</i>ltext_display<b class="pa">)</b></div>
<div class="cl" style="top:170px">                <b class="kw">self</b><i class="dt2">.</i>ltext_display<i class="dt2">.</i><i class="fn">delete</i><b class="pa">(</b><i class="nu">0</i><i class="op">,</i><i class="st">&quot;end&quot;</i><b class="pa">)</b></div>
<div class="cl" style="top:187px">                <b class="kw">self</b><i class="dt2">.</i>ltext_display<i class="dt2">.</i><i class="fn">insert</i><b class="pa">(</b><i class="nu">0</i><i class="op">,</i><i class="fn">str</i><b class="pa">(</b><b class="kw">self</b><i class="dt2">.</i>result<b class="pa">)</b><b class="pa">)</b></div>
<div class="cl" style="top:204px">                <b class="kw">self</b><i class="dt2">.</i><i class="fn">set_Neditable</i><b class="pa">(</b><b class="kw">self</b><i class="dt2">.</i>ltext_display<b class="pa">)</b></div>
<div class="cl" style="top:221px">            <b class="kw">self</b><i class="dt2">.</i><i class="fn">invalid_input_check</i><b class="pa">(</b><b class="pa">)</b></div>
<div class="cl" style="top:238px">        <b class="kw">self</b><i class="dt2">.</i>binOperFlag <i class="op">=</i> <i class="cn">False</i></div>
<div class="cl" style="top:255px">        <b class="kw">self</b><i class="dt2">.</i>singleOperFlag <i class="op">=</i> <i class="cn">False</i></div>
<div class="cl" style="top:272px"></div>
<div class="cl" style="top:289px">    <b class="kw">def</b> <i class="fn">buttons_editable</i><b class="pa">(</b><b class="kw">self</b><b class="pa">)</b><i class="op">:</i></div>
<div class="cl" style="top:306px">        <b class="kw">self</b><i class="dt2">.</i>button_back<i class="dt2">.</i><i class="fn">config</i><b class="pa">(</b>state <i class="op">=</i> NORMAL<b class="pa">)</b></div>
<div class="cl" style="top:323px">        <b class="kw">self</b><i class="dt2">.</i>button_divide<i class="dt2">.</i><i class="fn">config</i><b class="pa">(</b>state <i class="op">=</i> NORMAL<b class="pa">)</b></div>
<div class="cl" style="top:340px">        <b class="kw">self</b><i class="dt2">.</i>button_plus_minus<i class="dt2">.</i><i class="fn">config</i><b class="pa">(</b>state <i class="op">=</i> NORMAL<b class="pa">)</b></div>
<div class="cl" style="top:357px">        <b class="kw">self</b><i class="dt2">.</i>button_x<i class="dt2">.</i><i class="fn">config</i><b class="pa">(</b>state <i class="op">=</i> NORMAL<b class="pa">)</b></div>
<div class="cl" style="top:374px">        <b class="kw">self</b><i class="dt2">.</i>button_minus<i class="dt2">.</i><i class="fn">config</i><b class="pa">(</b>state <i class="op">=</i> NORMAL<b class="pa">)</b></div>
<div class="cl" style="top:391px">        <b class="kw">self</b><i class="dt2">.</i>button_plus<i class="dt2">.</i><i class="fn">config</i><b class="pa">(</b>state <i class="op">=</i> NORMAL<b class="pa">)</b></div>
<div class="cl" style="top:408px">        <b class="kw">self</b><i class="dt2">.</i>button_equal<i class="dt2">.</i><i class="fn">config</i><b class="pa">(</b>state <i class="op">=</i> NORMAL<b class="pa">)</b></div>
<div class="cl" style="top:425px">        <b class="kw">self</b><i class="dt2">.</i>button_0<i class="dt2">.</i><i class="fn">config</i><b class="pa">(</b>state <i class="op">=</i> NORMAL<b class="pa">)</b></div>
<div class="cl" style="top:442px">        <b class="kw">self</b><i class="dt2">.</i>button_1<i class="dt2">.</i><i class="fn">config</i><b class="pa">(</b>state <i class="op">=</i> NORMAL<b class="pa">)</b></div>
<div class="cl" style="top:459px">        <b class="kw">self</b><i class="dt2">.</i>button_2<i class="dt2">.</i><i class="fn">config</i><b class="pa">(</b>state <i class="op">=</i> NORMAL<b class="pa">)</b></div>
<div class="cl" style="top:476px">        <b class="kw">self</b><i class="dt2">.</i>button_3<i class="dt2">.</i><i class="fn">config</i><b class="pa">(</b>state <i class="op">=</i> NORMAL<b class="pa">)</b></div>
<div class="cl" style="top:493px">        <b class="kw">self</b><i class="dt2">.</i>button_4<i class="dt2">.</i><i class="fn">config</i><b class="pa">(</b>state <i class="op">=</i> NORMAL<b class="pa">)</b></div>
<div class="cl" style="top:510px">        <b class="kw">self</b><i class="dt2">.</i>button_5<i class="dt2">.</i><i class="fn">config</i><b class="pa">(</b>state <i class="op">=</i> NORMAL<b class="pa">)</b></div>
<div class="cl" style="top:527px">        <b class="kw">self</b><i class="dt2">.</i>button_6<i class="dt2">.</i><i class="fn">config</i><b class="pa">(</b>state <i class="op">=</i> NORMAL<b class="pa">)</b></div>
<div class="cl" style="top:544px">        <b class="kw">self</b><i class="dt2">.</i>button_7<i class="dt2">.</i><i class="fn">config</i><b class="pa">(</b>state <i class="op">=</i> NORMAL<b class="pa">)</b></div>
<div class="cl" style="top:561px">        <b class="kw">self</b><i class="dt2">.</i>button_8<i class="dt2">.</i><i class="fn">config</i><b class="pa">(</b>state <i class="op">=</i> NORMAL<b class="pa">)</b></div>
<div class="cl" style="top:578px">        <b class="kw">self</b><i class="dt2">.</i>button_9<i class="dt2">.</i><i class="fn">config</i><b class="pa">(</b>state <i class="op">=</i> NORMAL<b class="pa">)</b></div>
<div class="cl" style="top:595px"></div>
<div class="cl" style="top:612px">    <b class="kw">def</b> <i class="fn">buttons_not_editable</i><b class="pa">(</b><b class="kw">self</b><b class="pa">)</b><i class="op">:</i></div>
<div class="cl" style="top:629px">        <b class="kw">self</b><i class="dt2">.</i>button_back<i class="dt2">.</i><i class="fn">config</i><b class="pa">(</b>state <i class="op">=</i> DISABLED<b class="pa">)</b></div>
<div class="cl" style="top:646px">        <b class="kw">self</b><i class="dt2">.</i>button_divide<i class="dt2">.</i><i class="fn">config</i><b class="pa">(</b>state <i class="op">=</i> DISABLED<b class="pa">)</b></div>
<div class="cl" style="top:663px">        <b class="kw">self</b><i class="dt2">.</i>button_plus_minus<i class="dt2">.</i><i class="fn">config</i><b class="pa">(</b>state <i class="op">=</i> DISABLED<b class="pa">)</b></div>
<div class="cl" style="top:680px">        <b class="kw">self</b><i class="dt2">.</i>button_x<i class="dt2">.</i><i class="fn">config</i><b class="pa">(</b>state <i class="op">=</i> DISABLED<b class="pa">)</b></div>
<div class="cl" style="top:697px">        <b class="kw">self</b><i class="dt2">.</i>button_minus<i class="dt2">.</i><i class="fn">config</i><b class="pa">(</b>state <i class="op">=</i> DISABLED<b class="pa">)</b></div>
<div class="cl" style="top:714px">        <b class="kw">self</b><i class="dt2">.</i>button_plus<i class="dt2">.</i><i class="fn">config</i><b class="pa">(</b>state <i class="op">=</i> DISABLED<b class="pa">)</b></div>
<div class="cl" style="top:731px">        <b class="kw">self</b><i class="dt2">.</i>button_equal<i class="dt2">.</i><i class="fn">config</i><b class="pa">(</b>state <i class="op">=</i> DISABLED<b class="pa">)</b></div>
<div class="cl" style="top:748px">        <b class="kw">self</b><i class="dt2">.</i>button_0<i class="dt2">.</i><i class="fn">config</i><b class="pa">(</b>state <i class="op">=</i> DISABLED<b class="pa">)</b></div>
<div class="cl" style="top:765px">        <b class="kw">self</b><i class="dt2">.</i>button_1<i class="dt2">.</i><i class="fn">config</i><b class="pa">(</b>state <i class="op">=</i> DISABLED<b class="pa">)</b></div>
<div class="cl" style="top:782px">        <b class="kw">self</b><i class="dt2">.</i>button_2<i class="dt2">.</i><i class="fn">config</i><b class="pa">(</b>state <i class="op">=</i> DISABLED<b class="pa">)</b></div>
<div class="cl" style="top:799px">        <b class="kw">self</b><i class="dt2">.</i>button_3<i class="dt2">.</i><i class="fn">config</i><b class="pa">(</b>state <i class="op">=</i> DISABLED<b class="pa">)</b></div>
<div class="cl" style="top:816px">        <b class="kw">self</b><i class="dt2">.</i>button_4<i class="dt2">.</i><i class="fn">config</i><b class="pa">(</b>state <i class="op">=</i> DISABLED<b class="pa">)</b></div>
<div class="cl" style="top:833px">        <b class="kw">self</b><i class="dt2">.</i>button_5<i class="dt2">.</i><i class="fn">config</i><b class="pa">(</b>state <i class="op">=</i> DISABLED<b class="pa">)</b></div>
<div class="cl" style="top:850px">        <b class="kw">self</b><i class="dt2">.</i>button_6<i class="dt2">.</i><i class="fn">config</i><b class="pa">(</b>state <i class="op">=</i> DISABLED<b class="pa">)</b></div>
<div class="cl" style="top:867px">        <b class="kw">self</b><i class="dt2">.</i>button_7<i class="dt2">.</i><i class="fn">config</i><b class="pa">(</b>state <i class="op">=</i> DISABLED<b class="pa">)</b></div>
<div class="cl" style="top:884px">        <b class="kw">self</b><i class="dt2">.</i>button_8<i class="dt2">.</i><i class="fn">config</i><b class="pa">(</b>state <i class="op">=</i> DISABLED<b class="pa">)</b></div>
<div class="cl" style="top:901px">        <b class="kw">self</b><i class="dt2">.</i>button_9<i class="dt2">.</i><i class="fn">config</i><b class="pa">(</b>state <i class="op">=</i> DISABLED<b class="pa">)</b></div>
<div class="cl" style="top:918px"></div>
<div class="cl" style="top:935px">    <b class="kw">def</b> <i class="fn">check_binary_operation</i><b class="pa">(</b><b class="kw">self</b><b class="pa">)</b><i class="op">:</i></div>
<div class="cl cur" style="top:952px">        <b class="kw">if</b> <b class="kw">self</b><i class="dt2">.</i>plusFlag <i class="op">==</i> <i class="cn">True</i><i class="op">:</i></div>
<div class="cl" style="top:969px">            <b class="kw">self</b><i class="dt2">.</i>binOperation <i class="op">=</i> <i class="st">&quot;plus&quot;</i></div>
<div class="cl" style="top:986px">        <b class="kw">elif</b> <b class="kw">self</b><i class="dt2">.</i>minusFlag <i class="op">==</i> <i class="cn">True</i><i class="op">:</i></div>
<div class="cl" style="top:1003px">            <b class="kw">self</b><i class="dt2">.</i>binOperation <i class="op">=</i> <i class="st">&quot;minus&quot;</i></div>
<div class="cl" style="top:1020px">        <b class="kw">elif</b> <b class="kw">self</b><i class="dt2">.</i>multFlag <i class="op">==</i> <i class="cn">True</i><i class="op">:</i></div>
<div class="cl" style="top:1037px">            <b class="kw">self</b><i class="dt2">.</i>binOperation <i class="op">=</i> <i class="st">&quot;mult&quot;</i></div>
<div class="cl" style="top:1054px">        <b class="kw">elif</b> <b class="kw">self</b><i class="dt2">.</i>divideFlag <i class="op">==</i> <i class="cn">True</i><i class="op">:</i></div>
<div class="cl" style="top:1071px">            <b class="kw">self</b><i class="dt2">.</i>binOperation <i class="op">=</i> <i class="st">&quot;div&quot;</i></div>
</div>
</div>
<div class="a" style="left:654px;top:1139px;width:1px;height:15px;background:#e0e0e0"></div>

<div id="ctip" class="a"></div>
<div class="a" style="left:1429px;top:202px;width:8px;height:1px;background:#000"></div>
<svg class="a" style="left:0;top:0" width="1503" height="220"><path fill-rule="evenodd" d="M1454.27,190.05 L1454.69,188.11 L1457.31,188.11 L1457.73,190.05 L1458.99,190.57 L1460.65,189.49 L1462.51,191.35 L1461.43,193.01 L1461.95,194.27 L1463.89,194.69 L1463.89,197.31 L1461.95,197.73 L1461.43,198.99 L1462.51,200.65 L1460.65,202.51 L1458.99,201.43 L1457.73,201.95 L1457.31,203.89 L1454.69,203.89 L1454.27,201.95 L1453.01,201.43 L1451.35,202.51 L1449.49,200.65 L1450.57,198.99 L1450.05,197.73 L1448.11,197.31 L1448.11,194.69 L1450.05,194.27 L1450.57,193.01 L1449.49,191.35 L1451.35,189.49 L1453.01,190.57Z M1459.20,196.00 A3.2,3.2 0 1 0 1452.80,196.00 A3.2,3.2 0 1 0 1459.20,196.00Z" fill="#7e7e7e"/></svg>
<div id="ctbox" class="a"></div>
<div class="a" style="left:1243px;top:213px;font-size:23px;font-weight:bold;line-height:28px;letter-spacing:0.4px">True</div>
<div class="a" style="left:1243px;top:252px;font-size:10.75px;line-height:13px;width:220px">Boolean value, result of comparison operations</div>
<div class="a" style="left:1468px;top:196px;width:14px;height:1px;background:#2040ff"></div>
<div id="sbar" class="a"></div>
<div class="sbtn" style="top:187px"><svg width="13" height="13" style="position:absolute;left:0;top:0"><path d="M2.5,9 H10.5 L6.5,5Z" fill="#e8e8e8"/></svg></div>
<div class="sbtn" style="top:1067px;height:106px;width:16px"></div>
<div class="sbtn" style="top:1252px"><svg width="13" height="13" style="position:absolute;left:0;top:0"><path d="M2.5,4 H10.5 L6.5,8Z" fill="#e8e8e8"/></svg></div>

</body></html>
